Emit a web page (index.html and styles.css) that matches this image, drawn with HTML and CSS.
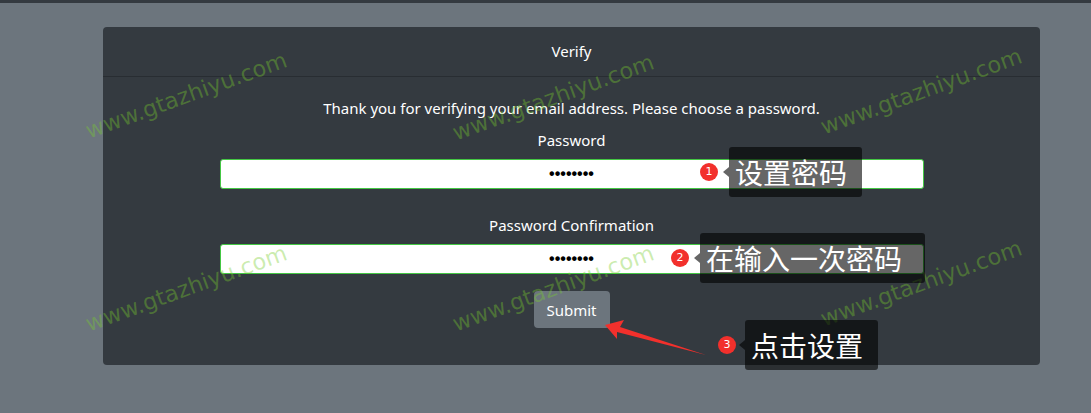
FILE: index.html
```html
<!DOCTYPE html>
<html lang="en">
<head>
  <meta charset="UTF-8" />
  <meta name="viewport" content="width=device-width, initial-scale=1.0" />
  <title>Verify</title>
  <link rel="stylesheet" href="styles.css">
</head>
<body>

  <div class="topbar"></div>

  <main class="page">
    <section class="card">
      <div class="card-header">Verify</div>
      <div class="card-body">
        <p class="intro">Thank you for verifying your email address. Please choose a password.</p>
        <form class="verify-form">
          <label class="field-label" for="password">Password</label>
          <input type="password" id="password" class="field" value="12345678">

          <label class="field-label second" for="confirm">Password Confirmation</label>
          <input type="password" id="confirm" class="field" value="12345678">

          <button type="submit" class="btn-submit">Submit</button>
        </form>
      </div>
    </section>
  </main>

  <!-- watermark + screenshot annotations -->
  <div class="overlay">
    <span class="mark m1">www.gtazhiyu.com</span>
    <span class="mark m2">www.gtazhiyu.com</span>
    <span class="mark m3">www.gtazhiyu.com</span>
    <span class="mark m4">www.gtazhiyu.com</span>
    <span class="mark m5">www.gtazhiyu.com</span>
    <span class="mark m6">www.gtazhiyu.com</span>

    <svg class="arrow" width="1091" height="413" viewBox="0 0 1091 413">
      <polygon points="605,325 624,320 620,327 706,355 617,332 617,339" fill="#f2302c" />
    </svg>

    <div class="tip tip1">
      <span class="tip-num">1</span>
      <span class="tip-box w-short">设置密码</span>
    </div>
    <div class="tip tip2">
      <span class="tip-num">2</span>
      <span class="tip-box w-long">在输入一次密码</span>
    </div>
    <div class="tip tip3">
      <span class="tip-num">3</span>
      <span class="tip-box w-short">点击设置</span>
    </div>
  </div>

</body>
</html>
```

FILE: styles.css
```css
body {
  margin: 0;
  background-color: #6c757d;
  color: #fff;
  font-family: "Noto Sans", "Open Sans", sans-serif;
  font-size: 15px;
  position: relative;
  height: 413px;
  overflow: hidden;
}
.topbar {
  height: 3px;
  background-color: #343a40;
}
.page {
  padding: 24px 0 0 103px;
}
.card {
  width: 937px;
  height: 338px;
  background-color: #343a40;
  border-radius: 4px;
  box-sizing: border-box;
}
.card-header {
  height: 49px;
  line-height: 49px;
  text-align: center;
  border-bottom: 1px solid rgba(0, 0, 0, 0.22);
}
.card-body {
  padding: 19px 20px 0;
  text-align: center;
}
.intro {
  margin: 0 0 8px;
  line-height: 24px;
}
.verify-form {
  display: flex;
  flex-direction: column;
  align-items: center;
}
.field-label {
  line-height: 24px;
  margin-bottom: 7px;
}
.field-label.second {
  margin-top: 24px;
}
.field {
  width: 704px;
  height: 30px;
  box-sizing: border-box;
  border: 1px solid #44c744;
  border-radius: 3px;
  background: #fff;
  color: #000;
  text-align: center;
  font-family: "Liberation Sans", Arial, sans-serif;
  font-size: 16px;
  font-weight: bold;
  padding: 0 8px;
  outline: none;
}
.btn-submit {
  margin-top: 17px;
  width: 76px;
  height: 37px;
  background-color: #6c757d;
  color: #fff;
  border: none;
  border-radius: 4px;
  font-family: "Noto Sans", "Open Sans", sans-serif;
  font-size: 15px;
  cursor: pointer;
}

.overlay {
  position: absolute;
  left: 0;
  top: 0;
  width: 1091px;
  height: 413px;
  pointer-events: none;
}
.mark {
  position: absolute;
  font-family: "DejaVu Sans", sans-serif;
  font-size: 22.5px;
  white-space: nowrap;
  color: rgba(120, 205, 45, 0.38);
  transform: translate(-50%, -50%) rotate(-20deg);
}
.m1 { left: 186px; top: 95px; }
.m2 { left: 553px; top: 97px; }
.m3 { left: 921px; top: 91px; }
.m4 { left: 186px; top: 288px; }
.m5 { left: 553px; top: 288px; }
.m6 { left: 921px; top: 283px; }

.arrow {
  position: absolute;
  left: 0;
  top: 0;
}
.tip {
  position: absolute;
  display: flex;
  align-items: center;
}
.tip1 { left: 700px; top: 147px; }
.tip2 { left: 671px; top: 233px; }
.tip3 { left: 718px; top: 320px; }
.tip-num {
  width: 18px;
  height: 18px;
  border-radius: 50%;
  background-color: #f2302c;
  color: #fff;
  font-family: "DejaVu Sans", sans-serif;
  font-size: 11px;
  line-height: 18px;
  text-align: center;
  margin-right: 11px;
}
.tip-box {
  position: relative;
  height: 50px;
  line-height: 50px;
  box-sizing: border-box;
  padding-left: 6px;
  background-color: rgba(0, 0, 0, 0.6);
  border-radius: 3px;
  color: #fff;
  font-family: "Noto Sans CJK SC", sans-serif;
  font-size: 28px;
  white-space: nowrap;
}
.tip-box::before {
  content: "";
  position: absolute;
  left: -6px;
  top: 20px;
  border-top: 5px solid transparent;
  border-bottom: 5px solid transparent;
  border-right: 6px solid rgba(0, 0, 0, 0.6);
}
.w-short { width: 133px; }
.w-long { width: 225px; }
.tip3 .tip-num { margin-right: 9px; }
```
